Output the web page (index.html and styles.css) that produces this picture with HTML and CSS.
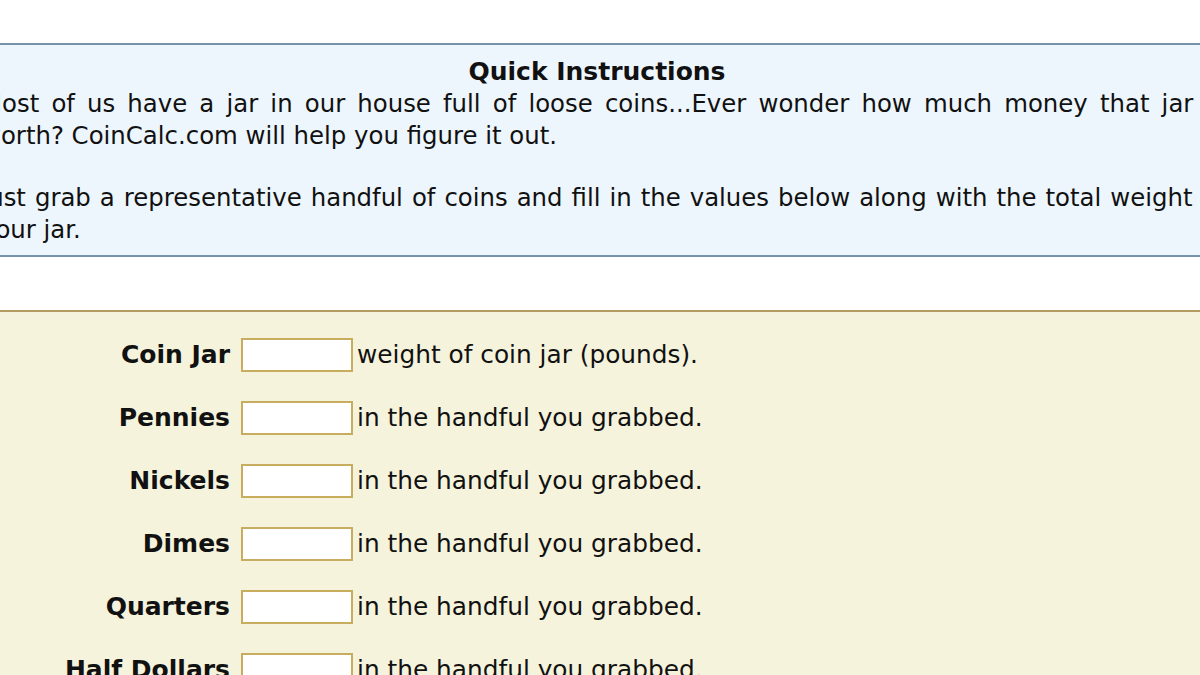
FILE: index.html
```html
<!DOCTYPE html>
<html lang="en">
<head>
<meta charset="utf-8">
<title>CoinCalc.com</title>
<link rel="stylesheet" href="styles.css">
</head>
<body>
<div class="page">
  <div class="instructions">
    <h2 class="title">Quick Instructions</h2>
    <p class="para">Most of us have a jar in our house full of loose coins...Ever wonder how much money that jar is worth? CoinCalc.com will help you figure it out.</p>
    <p class="para">Just grab a representative handful of coins and fill in the values below along with the total weight of your jar.</p>
  </div>
  <form class="calc">
    <div class="row">
      <label class="label" for="jar">Coin Jar</label>
      <input class="field" id="jar" type="text">
      <span class="hint">weight of coin jar (pounds).</span>
    </div>
    <div class="row">
      <label class="label" for="pennies">Pennies</label>
      <input class="field" id="pennies" type="text">
      <span class="hint">in the handful you grabbed.</span>
    </div>
    <div class="row">
      <label class="label" for="nickels">Nickels</label>
      <input class="field" id="nickels" type="text">
      <span class="hint">in the handful you grabbed.</span>
    </div>
    <div class="row">
      <label class="label" for="dimes">Dimes</label>
      <input class="field" id="dimes" type="text">
      <span class="hint">in the handful you grabbed.</span>
    </div>
    <div class="row">
      <label class="label" for="quarters">Quarters</label>
      <input class="field" id="quarters" type="text">
      <span class="hint">in the handful you grabbed.</span>
    </div>
    <div class="row">
      <label class="label" for="halves">Half Dollars</label>
      <input class="field" id="halves" type="text">
      <span class="hint">in the handful you grabbed.</span>
    </div>
  </form>
</div>
</body>
</html>
```
FILE: styles.css
```css
html, body {
  margin: 0;
  padding: 0;
  overflow: hidden;
  background: #ffffff;
}

body {
  font-family: Verdana, "DejaVu Sans", sans-serif;
  color: #111111;
  font-size: 24.4px;
  line-height: 32px;
}

.page {
  margin-left: -30px;
  width: 1266px;
  padding-top: 43px;
}

.instructions {
  background: #eef6fd;
  border: 2px solid #7593a9;
  padding: 11px 9px 9px 9px;
  text-align: justify;
}

.title {
  margin: 0;
  padding-right: 12px;
  text-align: center;
  font-size: 25px;
  line-height: 32px;
  font-weight: bold;
}

.para {
  margin: 0;
}

.para + .para {
  margin-top: 30px;
}

.calc {
  margin-top: 53px;
  background: #f5f3dc;
  border-top: 2px solid #b39b63;
  padding-top: 26px;
  min-height: 400px;
  display: flex;
  flex-direction: column;
  gap: 29px;
}

.row {
  display: flex;
  align-items: center;
  height: 34px;
}

.label {
  width: 271px;
  padding-right: 11px;
  box-sizing: border-box;
  text-align: right;
  font-weight: bold;
  font-size: 25px;
}

.field {
  box-sizing: border-box;
  width: 112px;
  height: 34px;
  margin: 0 4px 0 0;
  padding: 0;
  border: 2px solid #c9ad5f;
  background: #ffffff;
  font: inherit;
}

.hint {
  white-space: nowrap;
  font-size: 24.8px;
}
```
